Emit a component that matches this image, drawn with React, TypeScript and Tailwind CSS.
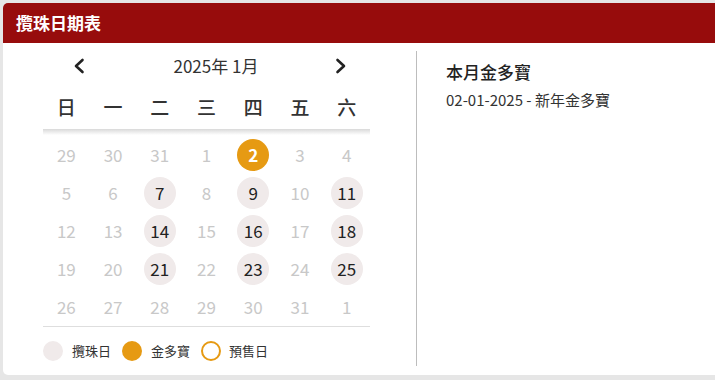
const weekdays = ["日", "一", "二", "三", "四", "五", "六"];

type Day = { d: number; kind?: "draw" | "jackpot" };

const rows: Day[][] = [
  [{ d: 29 }, { d: 30 }, { d: 31 }, { d: 1 }, { d: 2, kind: "jackpot" }, { d: 3 }, { d: 4 }],
  [{ d: 5 }, { d: 6 }, { d: 7, kind: "draw" }, { d: 8 }, { d: 9, kind: "draw" }, { d: 10 }, { d: 11, kind: "draw" }],
  [{ d: 12 }, { d: 13 }, { d: 14, kind: "draw" }, { d: 15 }, { d: 16, kind: "draw" }, { d: 17 }, { d: 18, kind: "draw" }],
  [{ d: 19 }, { d: 20 }, { d: 21, kind: "draw" }, { d: 22 }, { d: 23, kind: "draw" }, { d: 24 }, { d: 25, kind: "draw" }],
  [{ d: 26 }, { d: 27 }, { d: 28 }, { d: 29 }, { d: 30 }, { d: 31 }, { d: 1 }],
];

function Chevron({ dir }: { dir: "left" | "right" }) {
  return (
    <svg width="12" height="16" viewBox="0 0 12 16" fill="none">
      <path
        d={dir === "left" ? "M9.5 2 L3 8 L9.5 14" : "M2.5 2 L9 8 L2.5 14"}
        stroke="#222"
        strokeWidth="2.6"
        strokeLinecap="round"
        strokeLinejoin="round"
      />
    </svg>
  );
}

export default function App() {
  return (
    <div
      className="h-[380px] w-[715px] overflow-hidden bg-[#e6e6e6] pl-[3px] pt-[3px]"
      style={{ fontFamily: '"Noto Sans CJK TC", "Noto Sans", sans-serif' }}
    >
      <div className="w-[740px] h-[372px] rounded-[5px] bg-white overflow-hidden">
        <div className="h-[40px] bg-[#970c0c] flex items-center px-[13px]">
          <h1 className="text-[17px] font-bold text-white">攬珠日期表</h1>
        </div>

        <div className="flex pt-[8px]">
          <div className="w-[413px] pl-[40px]">
            <div className="w-[327px]">
              <div className="h-[30px] flex items-center justify-between pl-[30px] pr-[23px]">
                <Chevron dir="left" />
                <span className="pl-[12px] text-[17px] text-[#333]">2025年 1月</span>
                <Chevron dir="right" />
              </div>
              <div className="grid grid-cols-7 h-[48px] items-center pt-[4px]">
                {weekdays.map((w) => (
                  <div key={w} className="text-center text-[19px] font-medium text-[#333]">
                    {w}
                  </div>
                ))}
              </div>
              <div className="h-[6px] bg-gradient-to-b from-[#d9d9d9] to-white" />
              <div className="border-b border-[#dedede] pt-[1px]">
                {rows.map((r, i) => (
                  <div key={i} className="grid grid-cols-7 h-[38px] items-center">
                    {r.map((day, j) => (
                      <div key={j} className="flex justify-center">
                        {day.kind === "jackpot" ? (
                          <span className="w-[32px] h-[32px] rounded-full bg-[#e69a13] text-white font-bold text-[17px] flex items-center justify-center">
                            {day.d}
                          </span>
                        ) : day.kind === "draw" ? (
                          <span className="w-[32px] h-[32px] rounded-full bg-[#f0eaea] text-[#222] text-[17px] flex items-center justify-center">
                            {day.d}
                          </span>
                        ) : (
                          <span className="w-[32px] h-[32px] text-[#c8c8c8] text-[17px] flex items-center justify-center">
                            {day.d}
                          </span>
                        )}
                      </div>
                    ))}
                  </div>
                ))}
              </div>
              <div className="flex items-center h-[47px] text-[13px] text-[#333]">
                <span className="w-[20px] h-[20px] rounded-full bg-[#f0eaea]" />
                <span className="ml-[9px]">攬珠日</span>
                <span className="ml-[11px] w-[20px] h-[20px] rounded-full bg-[#e69a13]" />
                <span className="ml-[9px]">金多寶</span>
                <span className="ml-[11px] w-[20px] h-[20px] rounded-full border-2 border-[#e69a13]" />
                <span className="ml-[8px]">預售日</span>
              </div>
            </div>
          </div>

          <div className="border-l border-[#bdbdbd] h-[315px] pl-[29px] pt-[8px]">
            <div className="text-[17px] font-medium text-[#222]">本月金多寶</div>
            <div className="mt-[4px] text-[15px] text-[#333]">02-01-2025 - 新年金多寶</div>
          </div>
        </div>
      </div>
    </div>
  );
}
